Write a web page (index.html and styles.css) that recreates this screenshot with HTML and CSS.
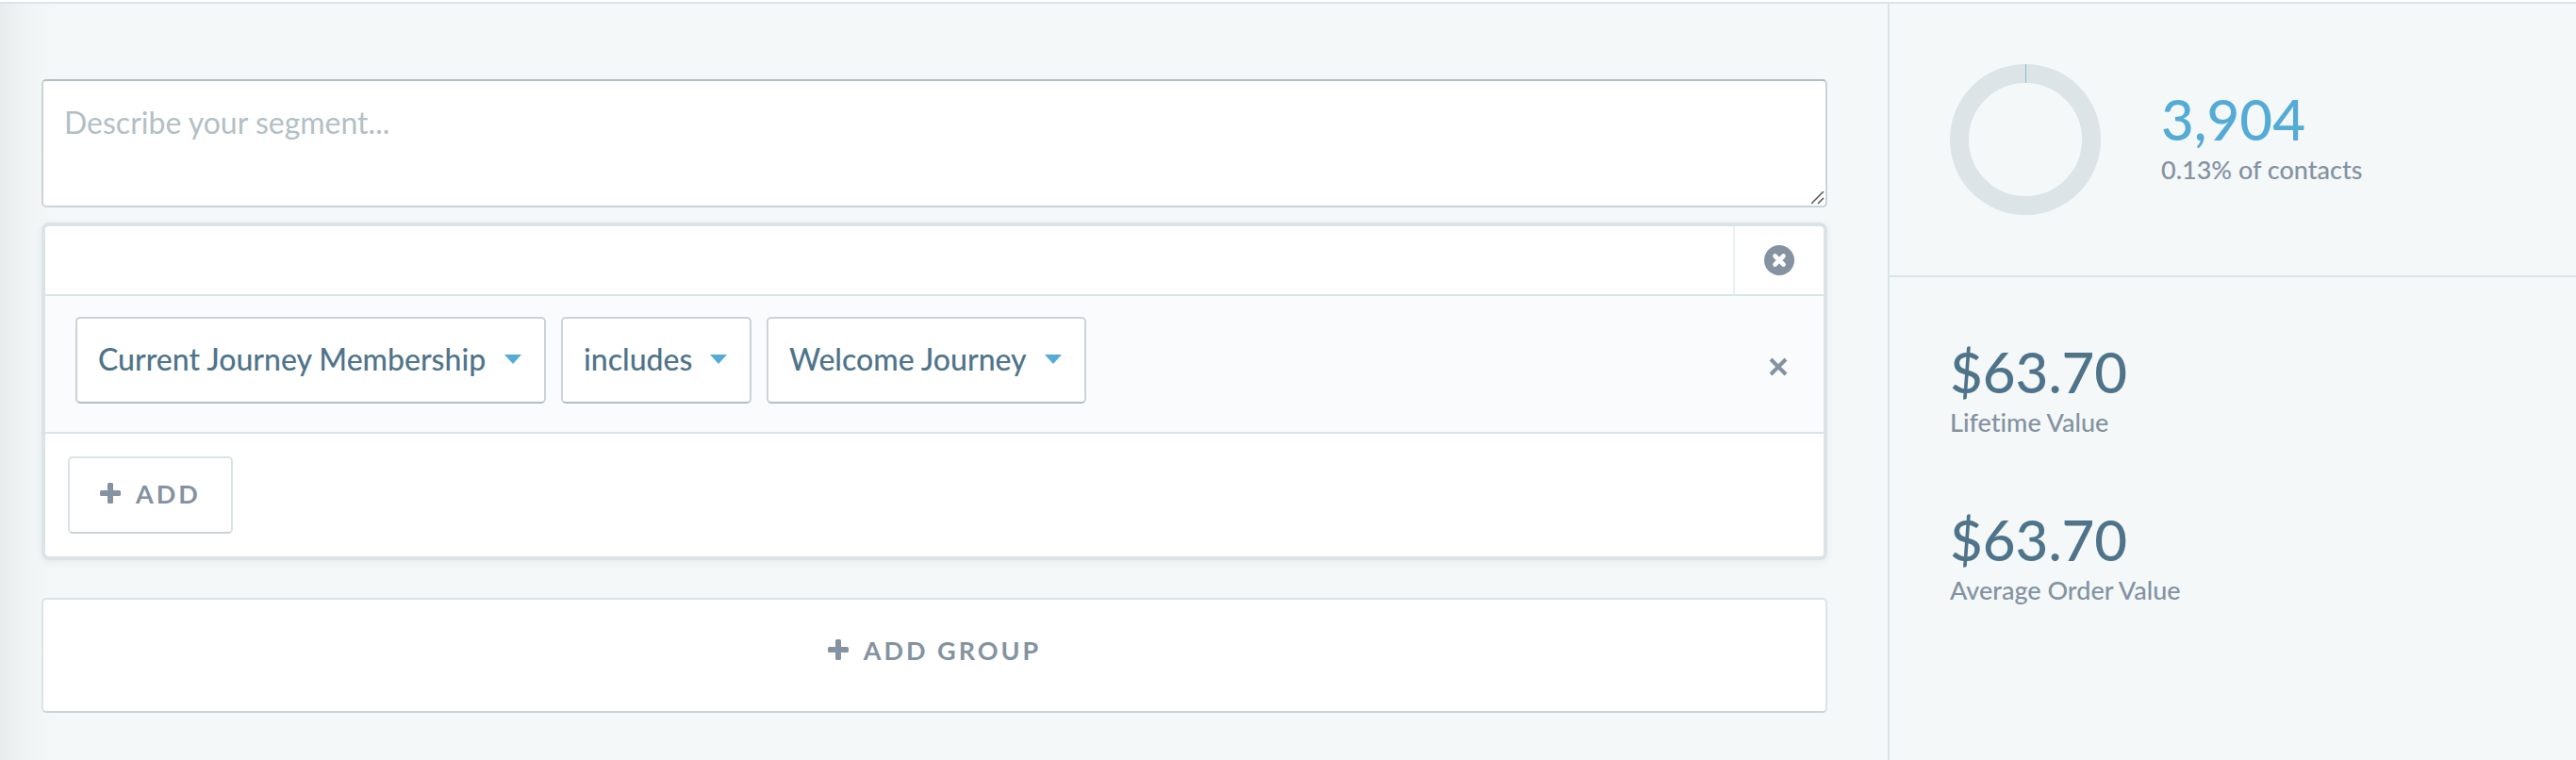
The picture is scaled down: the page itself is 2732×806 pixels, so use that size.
FILE: index.html
```html
<!DOCTYPE html>
<html lang="en">
<head>
  <meta charset="UTF-8" />
  <meta name="viewport" content="width=device-width, initial-scale=1" />
  <title>Segment Builder</title>
  <link rel="stylesheet" href="styles.css">
</head>
<body>
  <div class="page">
    <main class="builder">
      <textarea class="description" aria-label="Segment description" placeholder="Describe your segment..."></textarea>

      <section class="group">
        <div class="group-header">
          <button class="group-remove" type="button" aria-label="Remove group">
            <svg width="32" height="32" viewBox="0 0 32 32">
              <circle cx="16" cy="16" r="16" fill="#8492a1" />
              <path d="M11.5 11.5l9 9M20.5 11.5l-9 9" stroke="#fff" stroke-width="4.6" stroke-linecap="round" />
            </svg>
          </button>
        </div>

        <div class="rule">
          <div class="select-box">
            <select aria-label="Condition">
              <option>Current Journey Membership</option>
            </select>
            <span class="caret"></span>
          </div>
          <div class="select-box">
            <select aria-label="Operator">
              <option>includes</option>
            </select>
            <span class="caret"></span>
          </div>
          <div class="select-box">
            <select aria-label="Journey">
              <option>Welcome Journey</option>
            </select>
            <span class="caret"></span>
          </div>
          <button class="rule-remove" type="button" aria-label="Remove condition">
            <svg width="20" height="20" viewBox="0 0 20 20">
              <path d="M2 2l16 16M18 2L2 18" stroke="#8492a1" stroke-width="4" />
            </svg>
          </button>
        </div>

        <div class="group-footer">
          <button class="btn" type="button">
            <svg class="plus" width="22" height="22" viewBox="0 0 22 22">
              <path d="M9.5 0h3q1.5 0 1.5 1.5V8h6.5q1.5 0 1.5 1.5v3q0 1.5-1.5 1.5H14v6.5q0 1.5-1.5 1.5h-3Q8 22 8 20.5V14H1.5Q0 14 0 12.5v-3Q0 8 1.5 8H8V1.5Q8 0 9.5 0z" />
            </svg>
            Add
          </button>
        </div>
      </section>

      <button class="btn btn-group" type="button">
        <svg class="plus" width="22" height="22" viewBox="0 0 22 22">
          <path d="M9.5 0h3q1.5 0 1.5 1.5V8h6.5q1.5 0 1.5 1.5v3q0 1.5-1.5 1.5H14v6.5q0 1.5-1.5 1.5h-3Q8 22 8 20.5V14H1.5Q0 14 0 12.5v-3Q0 8 1.5 8H8V1.5Q8 0 9.5 0z" />
        </svg>
        Add Group
      </button>
    </main>

    <aside class="stats">
      <div class="stats-contacts">
        <svg class="ring" width="160" height="160" viewBox="0 0 160 160">
          <circle cx="80" cy="80" r="70" fill="none" stroke="#dce4e7" stroke-width="20" />
          <path d="M80.5 0v20" stroke="#8fbfd8" stroke-width="1" />
        </svg>
        <div class="stat">
          <div class="stat-value stat-value-blue">3,904</div>
          <div class="stat-label">0.13% of contacts</div>
        </div>
      </div>
      <div class="stats-values">
        <div class="stat">
          <div class="stat-value">$63.70</div>
          <div class="stat-label">Lifetime Value</div>
        </div>
        <div class="stat">
          <div class="stat-value">$63.70</div>
          <div class="stat-label">Average Order Value</div>
        </div>
      </div>
    </aside>
  </div>
</body>
</html>
```

FILE: styles.css
```css
* {
  box-sizing: border-box;
}

body {
  margin: 0;
  padding-top: 2px;
  background-color: #fff;
  color: #4f748a;
  font-family: Lato, "Open Sans", sans-serif;
  font-size: 32px;
  font-variant-ligatures: none;
}

button,
select,
textarea {
  font-family: inherit;
  font-size: inherit;
}

button {
  cursor: pointer;
}

svg {
  display: block;
}

.page {
  display: flex;
  min-height: calc(100vh - 2px);
  border-top: 2px solid #dbe4e9;
  background-color: #f4f8f9;
}

/* left column */
.builder {
  flex: 1;
  min-width: 0;
  padding: 80px 64px 48px 44px;
  background: linear-gradient(to right, #e8ecec 0, #eef2f3 20px, #f2f6f7 44px, rgba(244, 248, 249, 0) 64px);
}

.description {
  display: block;
  width: 100%;
  height: 136px;
  margin-bottom: 16px;
  padding: 24px 22px;
  border: 2px solid #cbd3d7;
  border-top-color: #b1bdc2;
  border-radius: 5px;
  background-color: #fff;
  color: #4f748a;
  line-height: 40px;
  resize: vertical;
}

.description::placeholder {
  color: #b3bfc5;
}

.description::-webkit-resizer {
  background: url("data:image/svg+xml,%3Csvg xmlns='http://www.w3.org/2000/svg' width='15' height='15'%3E%3Cpath d='M0 13L13 0M7 13l6-6' stroke='%23555' stroke-width='1.5' fill='none'/%3E%3C/svg%3E") no-repeat;
}

.group {
  margin-bottom: 40px;
  border: 4px solid #dbe3e7;
  border-radius: 8px;
  background-color: #fff;
  box-shadow: 0 2px 8px rgba(0, 0, 0, 0.06);
}

.group-header {
  display: flex;
  justify-content: flex-end;
  height: 74px;
  border-bottom: 2px solid #dbe3e7;
}

.group-remove {
  display: flex;
  align-items: center;
  justify-content: center;
  width: 96px;
  padding: 0;
  border: none;
  border-left: 2px solid #ebf0f3;
  background: none;
}

.rule {
  display: flex;
  align-items: center;
  gap: 16px;
  padding: 22px 38px 30px 32px;
  border-bottom: 2px solid #dbe3e7;
  background-color: #fafbfd;
}

.select-box {
  position: relative;
}

.select-box select {
  display: block;
  height: 92px;
  padding: 0 60px 4px 22px;
  border: 2px solid #cbd3d7;
  border-bottom-color: #b3bec2;
  border-radius: 5px;
  background-color: #fff;
  color: #4f748a;
  font-weight: 500;
  appearance: none;
  cursor: pointer;
}

.caret {
  position: absolute;
  top: 40px;
  right: 26px;
  border: 9px solid transparent;
  border-top: 10px solid #54abd5;
  border-bottom: 0;
  pointer-events: none;
}

.rule-remove {
  margin-left: auto;
  padding: 14px 0 0;
  border: none;
  background: none;
}

.group-footer {
  padding: 24px;
}

.btn {
  display: flex;
  align-items: center;
  justify-content: center;
  gap: 16px;
  height: 82px;
  padding: 0 32px 4px;
  border: 2px solid #dbe3e7;
  border-bottom-color: #cbd3d7;
  border-radius: 5px;
  background-color: #fff;
  color: #8492a1;
  font-size: 27px;
  font-weight: 700;
  letter-spacing: 3px;
  text-transform: uppercase;
}

.plus {
  fill: #8492a1;
}

.btn-group {
  width: 100%;
  height: 122px;
  padding-bottom: 12px;
}

/* right column */
.stats {
  flex: 0 0 730px;
  border-left: 2px solid #dbe4e9;
}

.stats-contacts {
  display: flex;
  gap: 64px;
  padding: 64px;
  border-bottom: 2px solid #dbe4e9;
}

.stats-contacts .stat {
  padding-top: 22px;
}

.stats-values {
  display: flex;
  flex-direction: column;
  gap: 70px;
  padding: 64px;
}

.stat-value {
  font-size: 60px;
  font-weight: 500;
  line-height: 72px;
}

.stat-value-blue {
  color: #54abd5;
}

.stat-label {
  color: #8492a1;
  font-size: 27px;
  font-weight: 500;
  line-height: 36px;
}
```
